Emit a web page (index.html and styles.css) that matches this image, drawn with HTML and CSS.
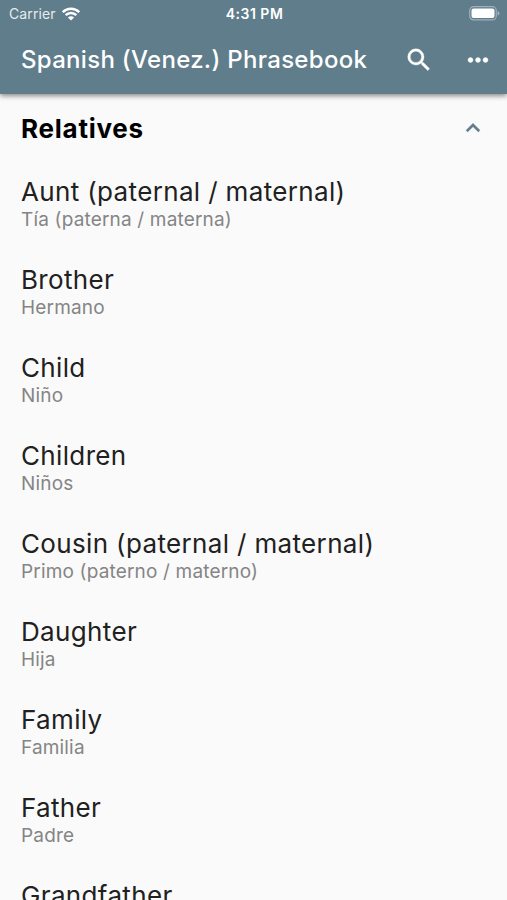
FILE: index.html
```html
<!DOCTYPE html>
<html lang="en">
<head>
    <meta charset="UTF-8">
    <meta name="viewport" content="width=device-width, initial-scale=1.0">
    <title>Spanish (Venez.) Phrasebook</title>
    <link rel="stylesheet" href="styles.css">
</head>
<body>
    <header class="app-bar">
        <div class="status-bar">
            <div class="carrier">
                <span class="carrier-name">Carrier</span>
                <svg class="wifi" viewBox="0 0 18 14" width="18" height="14" fill="none" stroke="#fff" stroke-width="2.5">
                    <path d="M0.8 5.2a11.6 11.6 0 0 1 16.4 0"/>
                    <path d="M3.7 8.2a7.5 7.5 0 0 1 10.6 0"/>
                    <path d="M9 13.6L5.9 10.5a4.4 4.4 0 0 1 6.2 0z" fill="#fff" stroke="none"/>
                </svg>
            </div>
            <span class="time">4:31 PM</span>
            <svg class="battery" viewBox="0 0 31 15" width="31" height="15">
                <rect x="0.7" y="0.7" width="26.6" height="13.2" rx="4" fill="none" stroke="#fff" stroke-opacity="0.4" stroke-width="1.2"/>
                <rect x="2.5" y="2.5" width="23" height="9.6" rx="2" fill="#fff"/>
                <path d="M28.7 5v4.6c1.1-.4 1.7-1.3 1.7-2.3s-.6-1.9-1.7-2.3z" fill="#fff" fill-opacity="0.45"/>
            </svg>
        </div>
        <div class="toolbar">
            <h1 class="title">Spanish (Venez.) Phrasebook</h1>
            <button class="icon-button" aria-label="Search">
                <svg viewBox="0 0 24 24" width="30" height="30" fill="#fff" stroke="#fff" stroke-width="0.3">
                    <path d="M15.5 14h-.79l-.28-.27A6.471 6.471 0 0 0 16 9.5 6.5 6.5 0 1 0 9.5 16c1.61 0 3.09-.59 4.23-1.57l.27.28v.79l5 4.99L20.49 19l-4.99-5zm-6 0C7.01 14 5 11.99 5 9.5S7.01 5 9.5 5 14 7.01 14 9.5 11.99 14 9.5 14z"/>
                </svg>
            </button>
            <button class="icon-button" aria-label="More">
                <svg viewBox="0 0 24 24" width="30" height="30" fill="#fff" stroke="#fff" stroke-width="0.3">
                    <path d="M6 10c-1.1 0-2 .9-2 2s.9 2 2 2 2-.9 2-2-.9-2-2-2zm12 0c-1.1 0-2 .9-2 2s.9 2 2 2 2-.9 2-2-.9-2-2-2zm-6 0c-1.1 0-2 .9-2 2s.9 2 2 2 2-.9 2-2-.9-2-2-2z"/>
                </svg>
            </button>
        </div>
    </header>

    <main class="content">
        <div class="section-header">
            <h2>Relatives</h2>
            <svg viewBox="0 0 24 24" width="28" height="28" fill="#607d8b" stroke="#607d8b" stroke-width="0.3">
                <path d="M12 8l-6 6 1.41 1.41L12 10.83l4.59 4.58L18 14z"/>
            </svg>
        </div>
        <ul class="phrases">
            <li class="phrase">
                <p class="source">Aunt (paternal / maternal)</p>
                <p class="translation" lang="es">Tía (paterna / materna)</p>
            </li>
            <li class="phrase">
                <p class="source">Brother</p>
                <p class="translation" lang="es">Hermano</p>
            </li>
            <li class="phrase">
                <p class="source">Child</p>
                <p class="translation" lang="es">Niño</p>
            </li>
            <li class="phrase">
                <p class="source">Children</p>
                <p class="translation" lang="es">Niños</p>
            </li>
            <li class="phrase">
                <p class="source">Cousin (paternal / maternal)</p>
                <p class="translation" lang="es">Primo (paterno / materno)</p>
            </li>
            <li class="phrase">
                <p class="source">Daughter</p>
                <p class="translation" lang="es">Hija</p>
            </li>
            <li class="phrase">
                <p class="source">Family</p>
                <p class="translation" lang="es">Familia</p>
            </li>
            <li class="phrase">
                <p class="source">Father</p>
                <p class="translation" lang="es">Padre</p>
            </li>
            <li class="phrase">
                <p class="source">Grandfather</p>
            </li>
        </ul>
    </main>
</body>
</html>
```

FILE: styles.css
```css
:root {
    --primary-color: #607d8b;
    --background-color: #fafafa;
    --text-color: #212121;
    --text-muted: #858585;
}

* {
    margin: 0;
    padding: 0;
    box-sizing: border-box;
}

body {
    font-family: Inter, "Liberation Sans", sans-serif;
    background: var(--background-color);
    color: var(--text-color);
    height: 100vh;
    display: flex;
    flex-direction: column;
    overflow: hidden;
}

.app-bar {
    flex: none;
    height: 94px;
    background: var(--primary-color);
    color: #fff;
    box-shadow: 0 2px 5px rgba(0, 0, 0, 0.45);
    z-index: 1;
}

.status-bar {
    display: grid;
    grid-template-columns: 1fr auto 1fr;
    align-items: center;
    height: 27px;
    padding: 0 7px 0 9px;
}

.carrier {
    display: flex;
    align-items: center;
    gap: 6px;
}

.carrier-name {
    font-size: 14px;
    letter-spacing: 0.1px;
    opacity: 0.85;
}

.time {
    font-size: 14px;
    font-weight: 600;
    letter-spacing: 0.5px;
}

.battery {
    justify-self: end;
}

.toolbar {
    display: flex;
    align-items: center;
    height: 65px;
    padding: 0 14px 0 21px;
}

.title {
    flex: 1;
    font-size: 24px;
    font-weight: 500;
    letter-spacing: 0.3px;
    white-space: nowrap;
}

.icon-button {
    width: 30px;
    height: 30px;
    margin-left: 29px;
    background: none;
    border: none;
}

.icon-button svg {
    display: block;
}

.content {
    flex: 1;
    overflow: hidden;
}

.section-header {
    display: flex;
    align-items: center;
    justify-content: space-between;
    height: 68px;
    padding: 0 20px 0 21px;
    color: #000;
}

.section-header h2 {
    font-size: 26px;
    font-weight: 700;
    letter-spacing: 0.75px;
}

.phrases {
    list-style: none;
}

.phrase {
    height: 88px;
    padding: 15px 21px 18px;
}

.source {
    font-size: 26px;
    line-height: 30px;
    letter-spacing: 0.35px;
}

.translation {
    font-size: 19px;
    line-height: 25px;
    letter-spacing: 0.17px;
    color: var(--text-muted);
}
```
